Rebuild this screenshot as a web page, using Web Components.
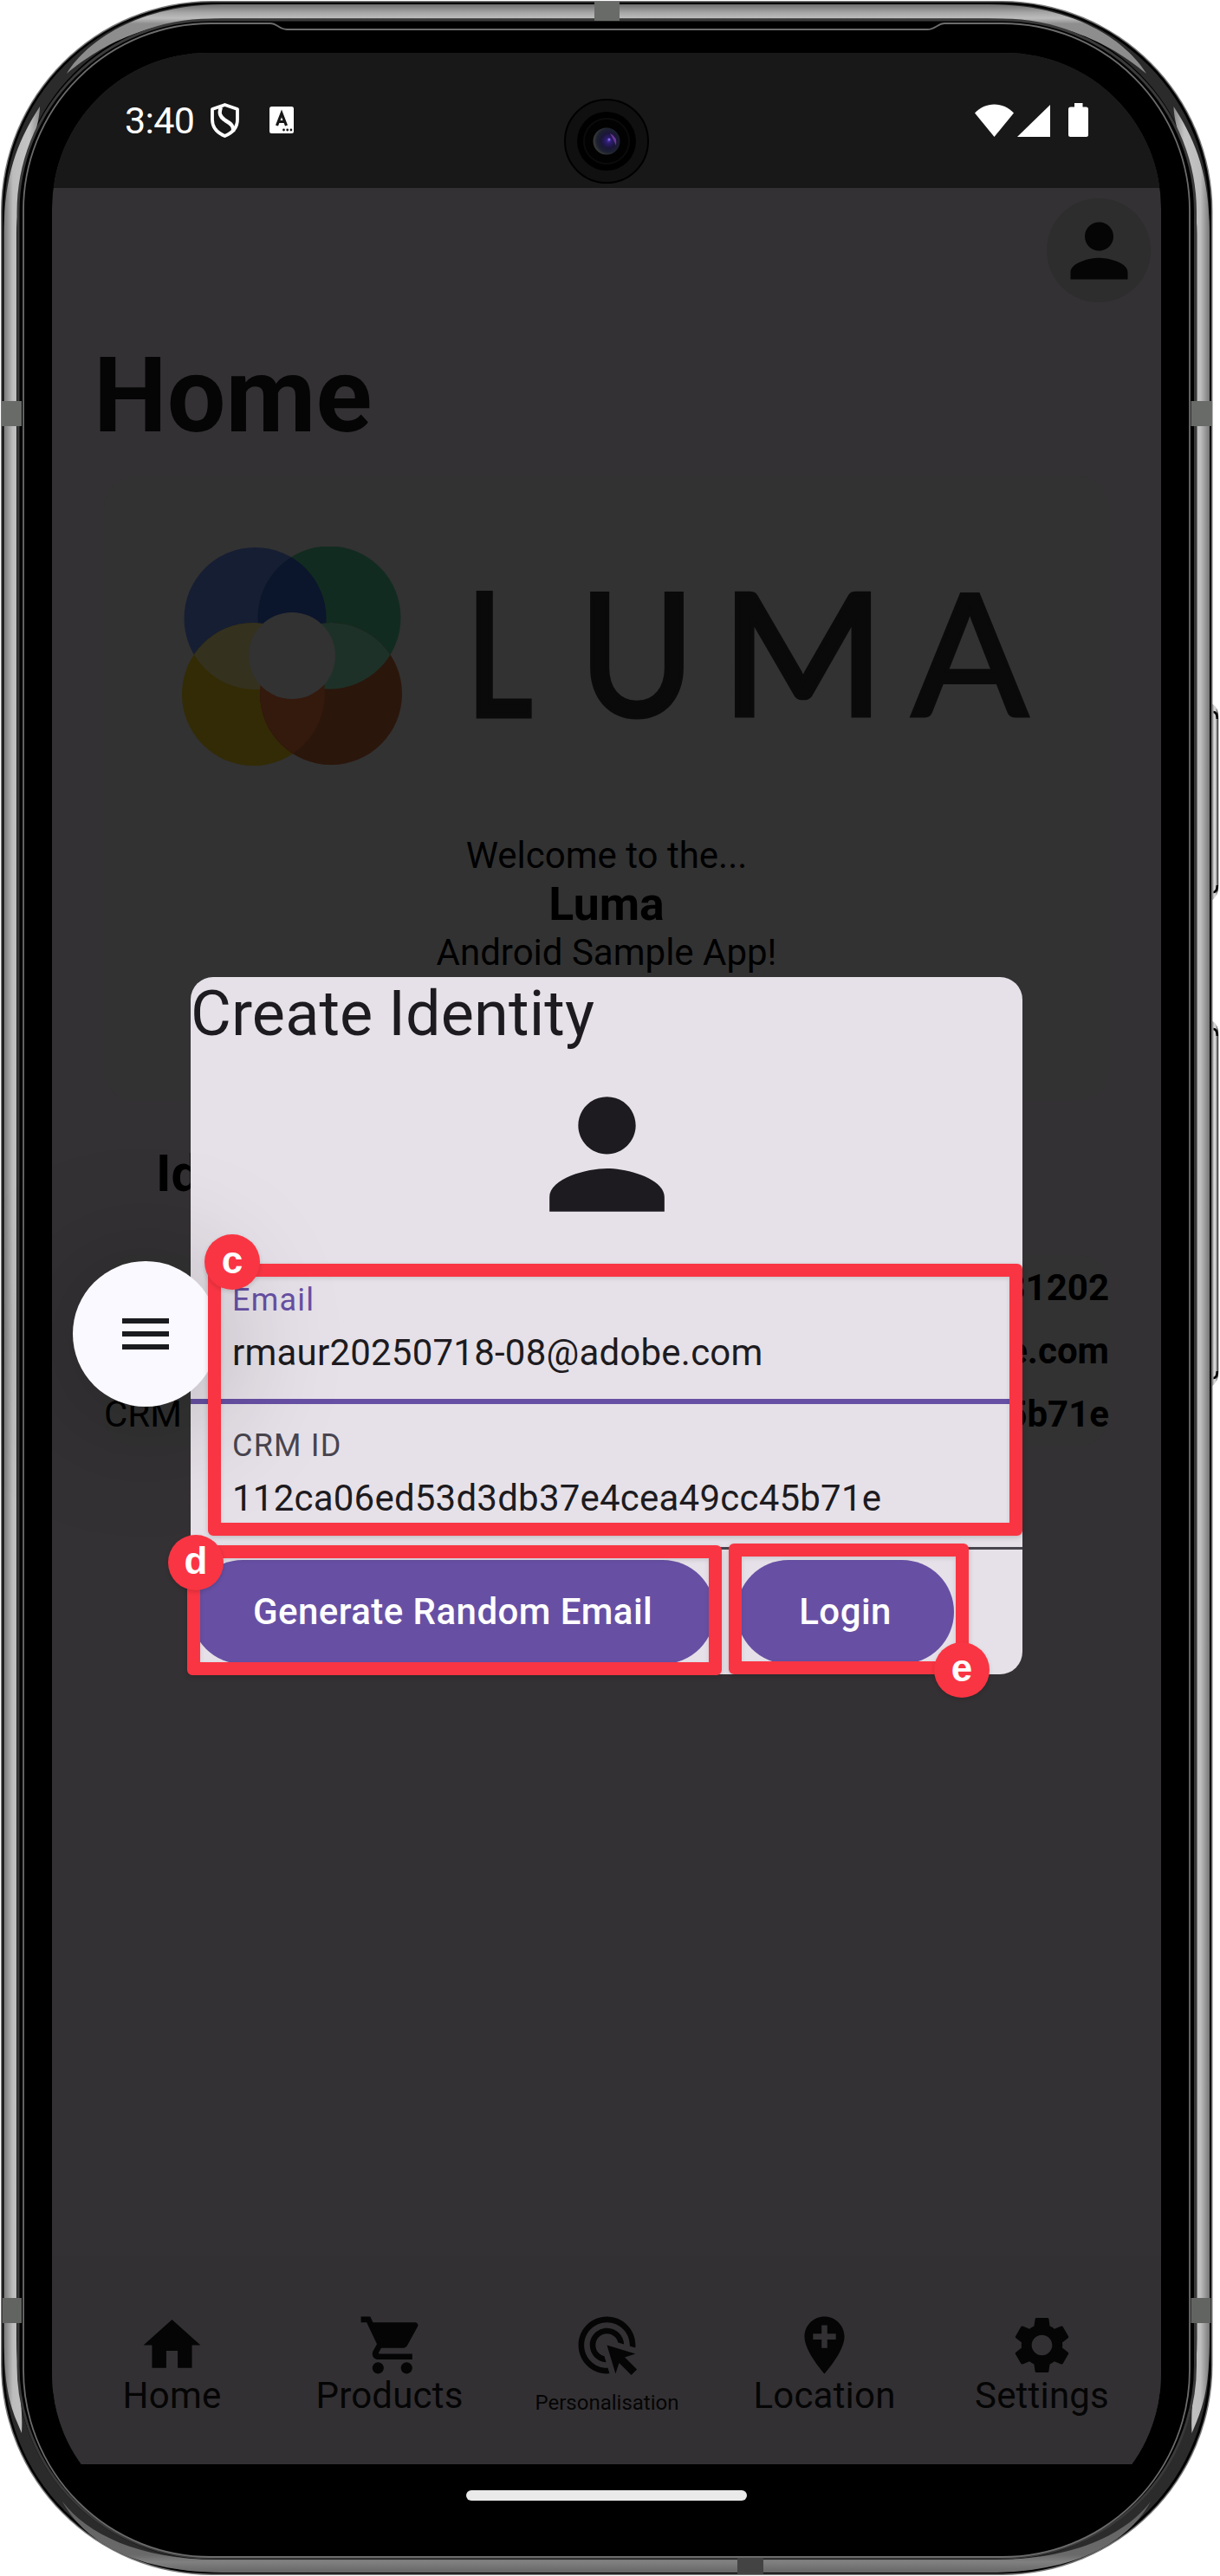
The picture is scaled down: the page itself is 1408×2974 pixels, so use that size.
<!DOCTYPE html>
<html lang="en">
<head>
<meta charset="utf-8">
<title>Luma – Create Identity</title>
<style>
html,body{margin:0;padding:0;background:#fff}
body{width:1408px;height:2974px;overflow:hidden;font-family:Roboto,"Noto Sans",sans-serif}
</style>
</head>
<body>
<phone-frame>
  <status-bar slot="status" time="3:40"></status-bar>
  <home-screen>
    <nav-item slot="nav" icon="home">Home</nav-item>
    <nav-item slot="nav" icon="cart">Products</nav-item>
    <nav-item slot="nav" icon="click" small>Personalisation</nav-item>
    <nav-item slot="nav" icon="location">Location</nav-item>
    <nav-item slot="nav" icon="settings">Settings</nav-item>
  </home-screen>
  <identity-dialog slot="overlay">
    <span slot="title">Create Identity</span>
    <text-field slot="fields" label="Email" active>rmaur20250718-08@adobe.com</text-field>
    <text-field slot="fields" label="CRM ID">112ca06ed53d3db37e4cea49cc45b71e</text-field>
    <pill-button slot="actions">Generate Random Email</pill-button>
    <pill-button slot="actions">Login</pill-button>
  </identity-dialog>
  <menu-fab slot="overlay"></menu-fab>
  <call-out slot="overlay" style="left:240px;top:1459px;width:940px;height:314px;--bx:28px;--by:-2px">c</call-out>
  <call-out slot="overlay" style="left:216px;top:1784px;width:617px;height:150px;--bx:10px;--by:20px">d</call-out>
  <call-out slot="overlay" style="left:841px;top:1782px;width:277px;height:151px;--bx:269px;--by:146px">e</call-out>
</phone-frame>

<script>
const define = (name, html, setup) => customElements.define(name, class extends HTMLElement {
  constructor() {
    super();
    this.attachShadow({ mode: 'open' }).innerHTML = html;
  }
  connectedCallback() { if (setup) setup(this, this.shadowRoot); }
});

const ICONS = {
  person: 'M12 12c2.21 0 4-1.79 4-4s-1.79-4-4-4-4 1.79-4 4 1.79 4 4 4zm0 2c-2.67 0-8 1.34-8 4v2h16v-2c0-2.66-5.33-4-8-4z',
  home: 'M10 20v-6h4v6h5v-8h3L12 3 2 12h3v8z',
  cart: 'M8 18c-1.1 0-1.99.9-1.99 2S6.9 22 8 22s2-.9 2-2-.9-2-2-2zM2 2v2h2l3.6 7.59-1.35 2.45c-.16.28-.25.61-.25.96 0 1.1.9 2 2 2h12v-2H8.42c-.14 0-.25-.11-.25-.25l.03-.12.9-1.63h7.45c.75 0 1.41-.41 1.75-1.03l3.58-6.49c.08-.14.12-.31.12-.48 0-.55-.45-1-1-1H6.21l-.94-2H2zm16 16c-1.1 0-1.99.9-1.99 2s.89 2 1.99 2 2-.9 2-2-.9-2-2-2z',
  click: 'M11.71 17.99C8.53 17.84 6 15.22 6 12c0-3.31 2.69-6 6-6 3.22 0 5.84 2.53 5.99 5.71l-2.1-.63C15.48 9.31 13.89 8 12 8c-2.21 0-4 1.79-4 4 0 1.89 1.31 3.48 3.08 3.89l.63 2.1zM22 12c0 .3-.01.6-.04.9l-1.97-.59c.01-.1.01-.21.01-.31 0-4.42-3.58-8-8-8s-8 3.58-8 8 3.58 8 8 8c.1 0 .21 0 .31-.01l.59 1.97c-.3.03-.6.04-.9.04-5.52 0-10-4.48-10-10S6.48 2 12 2s10 4.48 10 10zm-3.77 4.26L22 15l-10-3 3 10 1.26-3.77 4.27 4.27 1.98-1.98-4.28-4.26z',
  location: 'M12 2C8.14 2 5 5.14 5 9c0 5.25 7 13 7 13s7-7.75 7-13c0-3.86-3.14-7-7-7zm4 8h-3v3h-2v-3H8V8h3V5h2v3h3v2z',
  settings: 'M19.14 12.94c.04-.3.06-.61.06-.94 0-.32-.02-.64-.07-.94l2.03-1.58c.18-.14.23-.41.12-.61l-1.92-3.32c-.12-.22-.37-.29-.59-.22l-2.39.96c-.5-.38-1.03-.7-1.62-.94l-.36-2.54c-.04-.24-.24-.41-.48-.41h-3.84c-.24 0-.43.17-.47.41l-.36 2.54c-.59.24-1.13.57-1.62.94l-2.39-.96c-.22-.08-.47 0-.59.22L2.74 8.87c-.12.21-.08.47.12.61l2.03 1.58c-.05.3-.09.63-.09.94s.02.64.07.94l-2.03 1.58c-.18.14-.23.41-.12.61l1.92 3.32c.12.22.37.29.59.22l2.39-.96c.5.38 1.03.7 1.62.94l.36 2.54c.05.24.24.41.48.41h3.84c.24 0 .44-.17.47-.41l.36-2.54c.59-.24 1.13-.56 1.62-.94l2.39.96c.22.08.47 0 .59-.22l1.92-3.32c.12-.22.07-.47-.12-.61l-2.01-1.58zM12 15.6c-1.98 0-3.6-1.62-3.6-3.6s1.62-3.6 3.6-3.6 3.6 1.62 3.6 3.6-1.62 3.6-3.6 3.6z'
};

define('md-icon', `
<style>:host{display:block;flex:none}svg{display:block;width:100%;height:100%;fill:currentColor}</style>
<svg viewBox="0 0 24 24"><path/></svg>`, (el, root) =>
  root.querySelector('path').setAttribute('d', ICONS[el.getAttribute('name')]));

define('phone-frame', `
<style>
:host{display:block;position:relative;width:1408px;height:2974px;overflow:hidden}
.case{position:absolute;inset:0}
.display{position:relative;margin:0 68px 0 60px;padding-top:61px}
.screen{display:flex;flex-direction:column;width:1280px;height:2784px;overflow:hidden;background:#343134}
.clip{height:2859px;border-radius:180px;overflow:hidden;background:#000}
.home-bar{width:324px;height:12px;border-radius:6px;background:#eaeaea;margin:-45px auto 0;position:relative}
.camera{position:absolute;left:651px;top:114px}
</style>
<svg class="case" width="1408" height="2974" viewBox="0 0 1408 2974">
  <defs>
    <linearGradient id="l"><stop offset="0" stop-color="#777"/><stop offset=".25" stop-color="#bdbdbd"/><stop offset=".7" stop-color="#c4c4c4"/><stop offset="1" stop-color="#8c8c8c"/></linearGradient>
    <linearGradient id="t" x2="0" y2="1"><stop offset="0" stop-color="#6e6e6e"/><stop offset=".12" stop-color="#a6a6a6"/><stop offset=".2" stop-color="#bcbcbc"/><stop offset=".28" stop-color="#8e8e8e"/><stop offset="1" stop-color="#8b8b8b"/></linearGradient>
    <linearGradient id="b" x2="0" y2="1"><stop offset="0" stop-color="#606060"/><stop offset=".75" stop-color="#6a6a6a"/><stop offset=".85" stop-color="#808080"/><stop offset="1" stop-color="#666"/></linearGradient>
    <linearGradient id="k"><stop offset="0" stop-color="#444"/><stop offset=".2" stop-color="#aaa"/><stop offset=".45" stop-color="#e0e0e0"/><stop offset=".65" stop-color="#bbb"/><stop offset=".85" stop-color="#3a3a3a"/><stop offset="1" stop-color="#999"/></linearGradient>
  </defs>
  <path d="M1398 812Q1406.500 816 1406.500 830V1022Q1406.500 1034 1398 1040Z" fill="url(#k)"/>
  <path d="M1398 1178Q1406.500 1182 1406.500 1196V1583Q1406.500 1595 1398 1601Z" fill="url(#k)"/>
  <path d="M1400.500 822Q1404.500 822 1404.800 830M1400.500 1030Q1404.500 1030 1404.800 1022M1400.500 1188Q1404.500 1188 1404.800 1196M1400.500 1591Q1404.500 1591 1404.800 1583" fill="none" stroke="#000" stroke-width="2.500"/>
  <rect x="1" y="1" width="1398.500" height="2972" rx="243" fill="#777"/>
  <rect x="2.500" y="2.500" width="1395.500" height="2969" rx="241.500" fill="#000"/>
  <rect x="12" y="12" width="1376" height="2950" rx="232" fill="none" stroke="#2b2b2b" stroke-width="14"/>
  <path d="M46 123C22 160 4.500 200 4.500 270V2700C4.500 2765 15 2785 25 2809C27 2775 19 2740 19 2700V270C19 215 46 150 46 123Z" fill="url(#l)"/>
  <path d="M46 123C22 160 4.500 200 4.500 270V2700C4.500 2765 15 2785 25 2809C27 2775 19 2740 19 2700V270C19 215 46 150 46 123Z" fill="url(#l)" transform="matrix(-1 0 0 1 1400.500 0)"/>
  <path d="M77 85C95 55 150 5 260 5H1140C1250 5 1305 55 1323 85C1295 62 1240 21.500 1140 21.500H260C160 21.500 105 62 77 85Z" fill="url(#t)"/>
  <path d="M72 2888C100 2925 160 2955 250 2955H1150C1240 2955 1300 2925 1328 2888C1305 2930 1250 2970 1140 2970H260C150 2970 95 2930 72 2888Z" fill="url(#b)"/>
  <rect x="21" y="23" width="1358.500" height="2930" rx="222" fill="#000" stroke="#3a3a3a" stroke-width="3"/>
  <path d="M27 2736V243A216 216 0 0 1 243 27H312C320 27 322 34 331 34H1070C1080 34 1082 27 1090 27H1157A216 216 0 0 1 1373 243V2736A216 216 0 0 1 1157 2952H243A216 216 0 0 1 27 2736Z" fill="#000" stroke="#6c6c6c" stroke-width="1.800"/>
  <path d="M2 463h23v29H2zM1374.500 463h24v29h-24zM686 2h29v22h-29z" fill="#686b68"/>
  <path d="M3 2653h22v29H3zM1374.500 2653h23v29h-23z" fill="#626461"/>
  <path d="M851 2953h30v19h-30z" fill="#434343"/>
</svg>
<div class="display">
  <div class="clip"><div class="screen"><slot name="status"></slot><slot></slot></div></div>
  <div class="home-bar"></div>
</div>
<svg class="camera" width="98" height="98" viewBox="-49 -49 98 98">
  <defs><radialGradient id="lens" cx=".58" cy=".48" r=".55"><stop offset="0" stop-color="#4a32a0"/><stop offset=".2" stop-color="#2b1c6c"/><stop offset=".5" stop-color="#1b1638"/><stop offset=".8" stop-color="#1c2130"/><stop offset="1" stop-color="#383838"/></radialGradient></defs>
  <circle r="48" fill="#101010" stroke="#000" stroke-width="2"/><circle r="34" fill="#000"/><circle r="26" fill="#020202" stroke="#0b0b0b" stroke-width="2"/>
  <circle r="15.500" fill="url(#lens)"/><path d="M4-9Q13-5 11 5Q8-2 4-9Z" fill="#6a3796"/><circle cx="3" cy="-2" r="1.500" fill="#8268e6"/>
</svg>
<slot name="overlay"></slot>`);

define('status-bar', `
<style>
:host{display:block;flex:none;height:156px;background:#181818;color:#fff}
.row{display:flex;align-items:center;height:155px;padding:0 84px}
.time{font-size:43px;line-height:44px;letter-spacing:-.7px;width:99px}
svg{display:block;flex:none}
.gap{flex:1}
</style>
<div class="row">
  <span class="time"></span>
  <svg width="33" height="40" viewBox="0 0 33 40" fill="none" stroke="#fff" stroke-width="3.800" stroke-linejoin="round"><path d="M16.500 2L31 7V19C31 28 25 34.500 16.500 38C8 34.500 2 28 2 19V7Z"/><path d="M12 5C9 12 11 16 17 20C24 24 27 27 26 33" stroke-width="4.400"/></svg>
  <svg style="margin-left:35px" width="28" height="31" viewBox="0 0 28 31"><rect width="28" height="31" rx="2.500" fill="#fff"/><path d="M8.500 22L14 8L19.500 22M10.500 17.500H17.500" fill="none" stroke="#181818" stroke-width="3.200"/><g fill="#181818"><circle cx="16.500" cy="27" r="1.400"/><circle cx="20.700" cy="27" r="1.400"/><circle cx="24.900" cy="27" r="1.400"/></g></svg>
  <span class="gap"></span>
  <svg width="45" height="38" viewBox="0 0 45 38" fill="#fff"><path d="M22.500 38L0 10.500C6 4 14 .500 22.500 .500S39 4 45 10.500Z"/></svg>
  <svg style="margin-left:4px" width="38" height="38" viewBox="0 0 38 38" fill="#fff"><path d="M0 38L38 1V38Z"/></svg>
  <svg style="margin-left:21px" width="23" height="39" viewBox="0 0 23 39" fill="#fff"><path d="M7 0h9.500v4.500H20.500Q23 4.500 23 7V36.500Q23 39 20.500 39H2.500Q0 39 0 36.500V7Q0 4.500 2.500 4.500H7Z"/></svg>
</div>`, (el, root) => { root.querySelector('.time').textContent = el.getAttribute('time'); });

define('luma-logo', `
<style>
:host{display:flex;align-items:flex-start}
svg{display:block;flex:none}
.word{display:flex;font:400 196px/145px Lato,sans-serif;color:#0a0a0a;margin:47px 0 0 84px;white-space:nowrap}
.word span{display:block;transform-origin:0 50%;flex:none}
</style>
<svg width="255" height="253" viewBox="210 631 255 253">
  <defs>
    <clipPath id="cb"><circle cx="294.500" cy="714" r="82"/></clipPath>
    <clipPath id="cg"><circle cx="380" cy="713" r="82.500"/></clipPath>
    <clipPath id="cy"><circle cx="292.500" cy="801.500" r="82.500"/></clipPath>
  </defs>
  <circle cx="294.500" cy="714" r="82" fill="#161e33"/>
  <circle cx="380" cy="713" r="82.500" fill="#122b20"/>
  <circle cx="292.500" cy="801.500" r="82.500" fill="#332b05"/>
  <circle cx="382" cy="801" r="82" fill="#2b160c"/>
  <circle cx="380" cy="713" r="82.500" fill="#0b152c" clip-path="url(#cb)"/>
  <circle cx="292.500" cy="801.500" r="82.500" fill="#34311e" clip-path="url(#cb)"/>
  <circle cx="382" cy="801" r="82" fill="#1e3128" clip-path="url(#cg)"/>
  <circle cx="382" cy="801" r="82" fill="#34190d" clip-path="url(#cy)"/>
  <circle cx="337" cy="757" r="50" fill="#323232"/>
</svg>
<div class="word"><span data-ink="65" data-step="132" data-bold="7">L</span><span data-ink="108" data-step="166" data-bold="5">U</span><span data-ink="159" data-step="203" data-bold="5">M</span><span data-ink="139" data-step="140" data-bold="4">A</span></div>`, (el, root) => {
  // Each letter gets its own ink width, weight and advance, as in the brand wordmark.
  const ctx = document.createElement('canvas').getContext('2d');
  ctx.font = '400 196px Lato';
  for (const s of root.querySelectorAll('.word span')) {
    const m = ctx.measureText(s.textContent), bold = +s.dataset.bold;
    const ink = m.actualBoundingBoxLeft + m.actualBoundingBoxRight + bold;
    const k = s.dataset.ink / ink;
    s.style.width = s.dataset.step + 'px';
    s.style.webkitTextStroke = bold + 'px #0a0a0a';
    s.style.transform = `translateX(${(m.actualBoundingBoxLeft + bold / 2) * k}px) scaleX(${k})`;
  }
});

define('home-screen', `
<style>
:host{display:flex;flex:1;flex-direction:column;color:#000;white-space:nowrap}
.top{display:flex;justify-content:flex-end;padding:12px 12px 0}
.avatar{width:120px;height:120px;border-radius:50%;background:#2d2d2d;display:grid;place-items:center;color:#050505}
.avatar md-icon{width:99px;height:99px}
h1{margin:38px 0 0 48px;font-size:120px;line-height:140px;font-weight:700;color:#050505}
.card{margin:0 60px;background:#323232;border-radius:36px}
.hero{margin-top:23px;height:721px;box-sizing:border-box;padding:81px 0 0}
luma-logo{margin-left:90px}
.lines{display:flex;flex-direction:column;align-items:center;gap:1px;margin-top:79px;font-size:42px;line-height:50px}
.lines b{font-size:53.500px;line-height:60px}
h2{margin:49px 0 0 120px;font-size:60px;line-height:70px}
.ids{margin-top:59px;padding:1px 0;width:1160px}
.row{display:flex;justify-content:space-between;font-size:42px;line-height:73px}
.nav{margin-top:auto;display:flex;justify-content:space-between;height:240px;box-sizing:border-box;padding:63px 12px 0 13px;background:#323033}
</style>
<div class="top"><div class="avatar"><md-icon name="person"></md-icon></div></div>
<h1>Home</h1>
<section class="card hero">
  <luma-logo></luma-logo>
  <div class="lines"><span>Welcome to the...</span><b>Luma</b><span>Android Sample App!</span></div>
</section>
<h2>Identities</h2>
<section class="card ids">
  <div class="row"><span></span><b>31202</b></div>
  <div class="row"><span></span><b>e.com</b></div>
  <div class="row"><span>CRM</span><b>5b71e</b></div>
</section>
<nav class="nav"><slot name="nav"></slot></nav>`);

define('nav-item', `
<style>
:host{display:flex;flex-direction:column;align-items:center;width:251px;color:#050505;font-size:42px;line-height:50px}
md-icon{width:79px;height:79px}
span{margin-top:-6px;letter-spacing:.2px}
:host([small]) span{font-size:24px;line-height:27px;margin-top:13.500px;letter-spacing:0}
</style>
<md-icon></md-icon><span><slot></slot></span>`, (el, root) => {
  const icon = root.querySelector('md-icon');
  icon.shadowRoot.querySelector('path').setAttribute('d', ICONS[el.getAttribute('icon')]);
  icon.setAttribute('name', el.getAttribute('icon'));
});

define('identity-dialog', `
<style>
:host{position:absolute;left:220px;top:1128px;width:960px;height:805px;border-radius:26px;overflow:hidden;background:#e6e1e8;color:#1d1b20;display:flex;flex-direction:column;white-space:nowrap}
.title{font-size:72px;line-height:85px;letter-spacing:.12px}
md-icon{width:199px;height:199px;margin:20px auto 21px}
.actions{display:flex;gap:25px;padding-top:12px}
</style>
<div class="title"><slot name="title"></slot></div>
<md-icon name="person"></md-icon>
<slot name="fields"></slot>
<div class="actions"><slot name="actions"></slot></div>`);

define('text-field', `
<style>
:host{display:block;box-sizing:border-box;height:168px;padding:24px 48px 0;border-bottom:3px solid #49454f}
:host([active]){border-bottom:6px solid #6750a4}
label{display:block;font-size:36px;line-height:48px;letter-spacing:1.2px;color:#49454f}
:host([active]) label{color:#6750a4}
.v{margin-top:7px;font-size:42px;line-height:60px;letter-spacing:.22px;color:#1d1b20}
</style>
<label></label><div class="v"><slot></slot></div>`, (el, root) => {
  root.querySelector('label').textContent = el.getAttribute('label');
});

define('pill-button', `
<style>
:host{display:block;height:120px;padding:0 72px;border-radius:60px;background:#6750a4;color:#fff;font-size:42px;font-weight:500;line-height:120px;letter-spacing:.44px}
</style><slot></slot>`);

define('menu-fab', `
<style>
:host{position:absolute;left:84px;top:1456px;width:168px;height:168px;border-radius:50%;background:#faf9ff;box-shadow:0 10px 150px rgba(0,0,0,.28);display:flex;flex-direction:column;align-items:center;justify-content:center;gap:9px}
i{width:54px;height:6px;background:#1a1b1f}
</style><i></i><i></i><i></i>`);

define('call-out', `
<style>
:host{position:absolute;box-sizing:border-box;border:15px solid #f93543;border-radius:6px;box-shadow:0 2px 6px rgba(0,0,0,.18),inset 0 2px 5px rgba(0,0,0,.12)}
.b{position:absolute;left:calc(var(--bx) - 47px);top:calc(var(--by) - 47px);width:64px;height:64px;border-radius:50%;background:#f93543;color:#fff;text-align:center;font:700 44px/60px "Liberation Sans",sans-serif;box-shadow:0 2px 5px rgba(0,0,0,.15)}
</style><div class="b"><slot></slot></div>`);
</script>
</body>
</html>
